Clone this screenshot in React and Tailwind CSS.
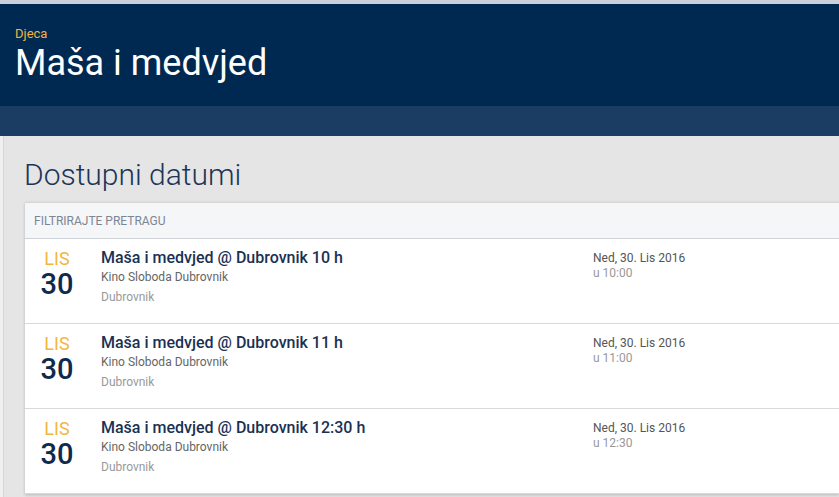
const EVENTS = [
  { title: 'Maša i medvjed @ Dubrovnik 10 h', time: 'u 10:00' },
  { title: 'Maša i medvjed @ Dubrovnik 11 h', time: 'u 11:00' },
  { title: 'Maša i medvjed @ Dubrovnik 12:30 h', time: 'u 12:30' }
];

const EventRow = ({ ev }) => (
  <div className="flex h-[85px] border-b border-[#d9d9d9] bg-white">
    <div className="w-[64px] shrink-0 flex flex-col items-center pt-[10px]">
      <span className="text-[18px] leading-[20px] text-[#f2b63f]">LIS</span>
      <span className="text-[29px] leading-[30px] font-medium text-[#0f2a4d]">30</span>
    </div>
    <div className="w-[504px] shrink-0 pl-[12px] pt-[9px]">
      <h3 className="text-[16px] leading-[20px] font-medium text-[#1a3153]">{ev.title}</h3>
      <p className="text-[12px] leading-[16px] mt-[1px] text-[#666]">Kino Sloboda Dubrovnik</p>
      <p className="text-[12px] leading-[16px] mt-[4px] text-[#999]">Dubrovnik</p>
    </div>
    <div className="pt-[12px]">
      <p className="text-[12px] leading-[15px] text-[#555]">Ned, 30. Lis 2016</p>
      <p className="text-[12px] leading-[15px] text-[#999]">{ev.time}</p>
    </div>
  </div>
);

const App = () => {
  return (
    <div className="w-[839px] h-[497px] overflow-hidden bg-[#e5e5e5]" style={{ fontFamily: 'Roboto, "Liberation Sans", sans-serif' }}>
      <div className="h-[4px] bg-[#c9d0d9]" />
      <header className="h-[102px] bg-[#002952] pl-[15px] pt-[21px]">
        <p className="text-[13px] leading-[18px] text-[#f0b43f]">Djeca</p>
        <h1 className="text-[36px] leading-[40px] text-white">Maša i medvjed</h1>
      </header>
      <div className="h-[30px] bg-[#1b3d63]" />
      <div className="flex h-full">
        <div className="w-[4px] shrink-0 bg-[#f0f0f0] border-r border-[#d6d6d6]" />
        <main className="flex-1 pl-[20px] pt-[15px]">
          <h2 className="text-[30px] leading-[48px] font-light text-[#1c3557] mb-[3px]">Dostupni datumi</h2>
          <div className="ml-[1px] bg-white shadow-[0_1px_3px_rgba(0,0,0,0.2)] border-t border-[#d8d8d8]">
            <div className="h-[36px] flex items-center pl-[9px] bg-[#f5f6f8] border-b border-[#cfd3d8]">
              <span className="text-[12px] text-[#7b8694] uppercase">Filtrirajte pretragu</span>
            </div>
            {EVENTS.map(ev => <EventRow key={ev.title} ev={ev} />)}
          </div>
        </main>
      </div>
    </div>
  );
};

export default App;
